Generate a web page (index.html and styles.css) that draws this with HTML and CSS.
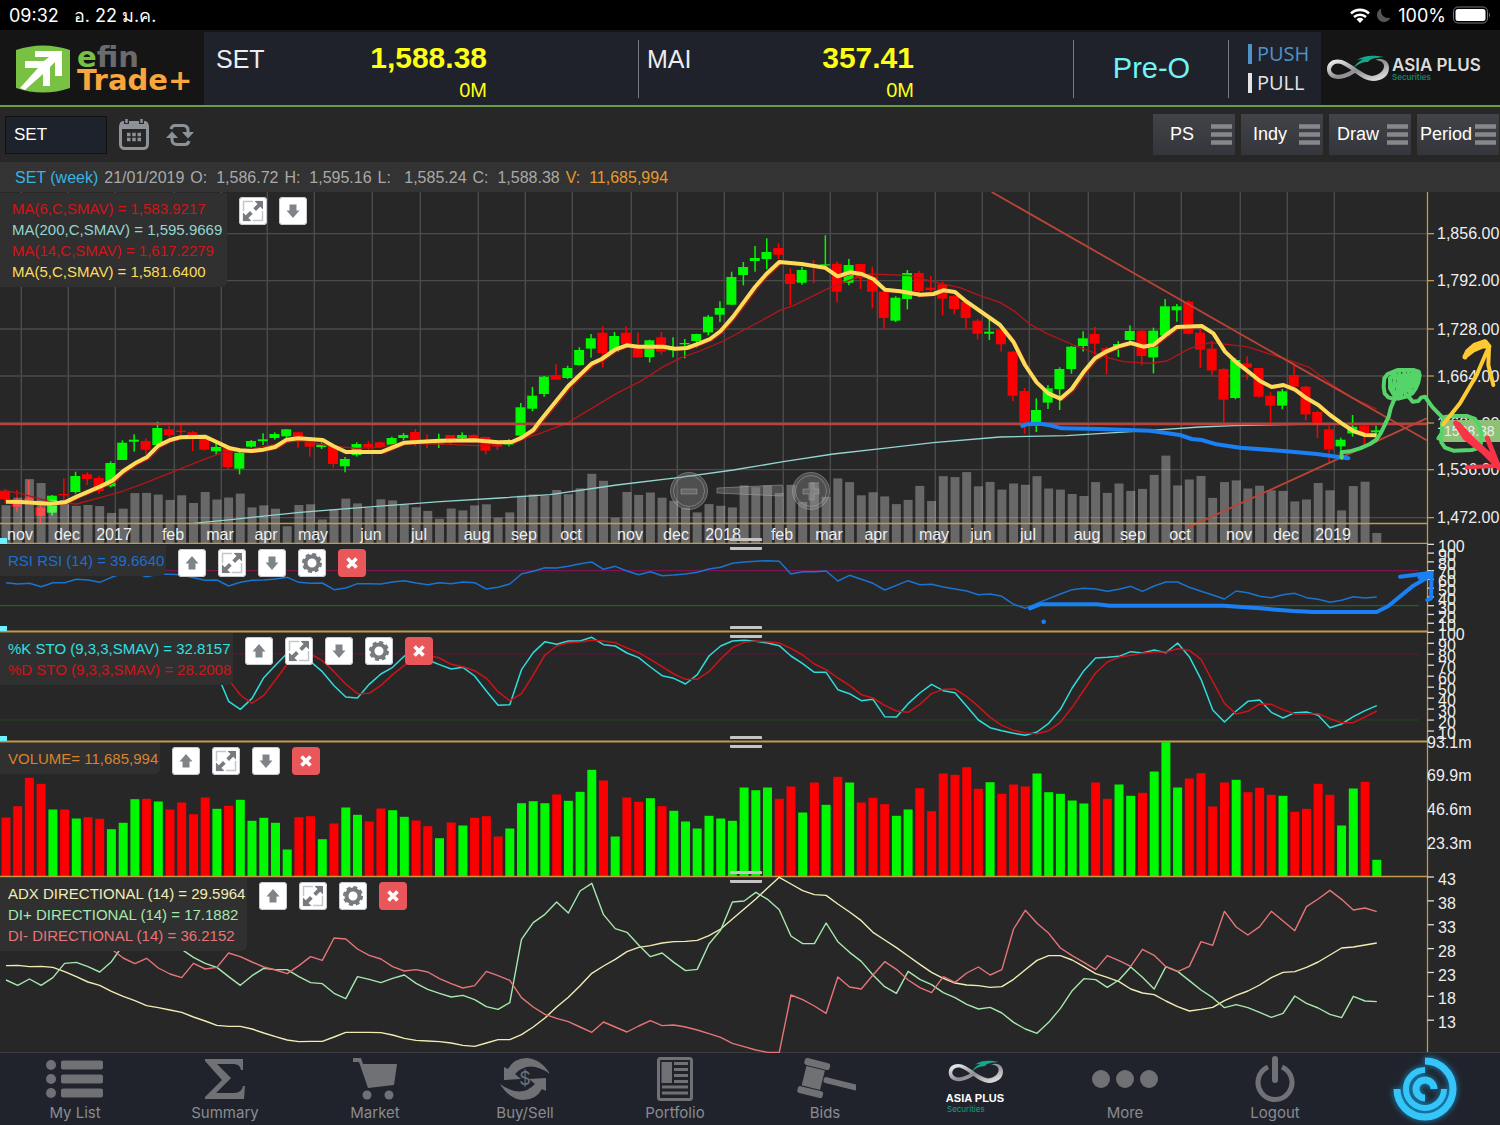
FILE: index.html
```html
<!DOCTYPE html>
<html lang="th">

<head>
    <meta charset="UTF-8">
    <meta name="viewport" content="width=device-width, initial-scale=1.0">
    <title>efin Trade+</title>

    <link rel="stylesheet" href="styles.css">
</head>

<body>
    <!-- shared icons -->
    <svg class="sprite" aria-hidden="true">
        <defs>
            <linearGradient id="silver" x1="0" y1="0" x2="1" y2="1">
                <stop offset="0" stop-color="#ffffff" />
                <stop offset="0.5" stop-color="#8e8e92" />
                <stop offset="1" stop-color="#f4f4f4" />
            </linearGradient>
        </defs>
        <symbol id="i-up" viewBox="0 0 28 28">
            <path d="M14 7l6.500 7.500h-3v6h-7v-6h-3z" fill="#808488" />
        </symbol>
        <symbol id="i-down" viewBox="0 0 28 28">
            <path d="M14 21l6.500-7.500h-3v-6h-7v6h-3z" fill="#808488" />
        </symbol>
        <symbol id="i-expand" viewBox="0 0 28 28">
            <path d="M4.500 14V4.500H14M23.500 14v9.500H14M4.500 17v6.500h6M17 4.500h6" fill="none" stroke="#c4c6c8" stroke-width="1.500" />
            <path d="M24 4v8.500l-2.800-2.800-4.200 4.200-2.700-2.700 4.200-4.200L15.500 4zM4 24v-8.500l2.800 2.800 4.200-4.200 2.700 2.700-4.200 4.200L12.500 24z" fill="#777b7f" />
        </symbol>
        <symbol id="i-gear" viewBox="0 0 28 28">
            <circle cx="14" cy="14" r="6.500" fill="none" stroke="#777b7f" stroke-width="4" />
            <circle cx="14" cy="14" r="8.800" fill="none" stroke="#777b7f" stroke-width="2.500" stroke-dasharray="4 2.910" />
        </symbol>
        <symbol id="i-close" viewBox="0 0 28 28">
            <path d="M9.500 9.500l9 9M18.500 9.500l-9 9" stroke="#fff" stroke-width="3.600" />
        </symbol>
        <symbol id="i-bars" viewBox="0 0 21 21">
            <path d="M0 2.500h21M0 10.500h21M0 18.500h21" stroke="#86878b" stroke-width="4.500" />
        </symbol>
        <symbol id="i-loop" viewBox="0 0 64 27">
            <path d="M2 14C2 6 10 3 17 5C28 9 36 19 47 21C54 20 59 16 59 11C59 7 54 5 50 5C58 2 64 6 64 13C64 21 57 26 48 26C35 25 28 14 16 9C10 7 6 11 6 15C7 19 12 21 18 19C24 17 27 15 30 13L33 16C27 20 22 23 14 24C6 24 2 20 2 14Z" fill="url(#silver)" />
            <path d="M29 13C30 9 35 6 38 4L32 5C40 0 48 0 59 2C50 3 46 3 43 7C38 7 34 8 29 13Z" fill="#18a689" />
        </symbol>
    </svg>

    <div class="statusbar">
        <span>09:32</span>
        <span class="today">อ. 22 ม.ค.</span>
        <span class="device">
            <svg width="20" height="15" viewBox="0 0 20 15">
                <path d="M1 5.500A13 13 0 0 1 19 5.500M4 9A9 9 0 0 1 16 9" fill="none" stroke="#fff" stroke-width="2.600" />
                <path d="M6.500 11.300a5 5 0 0 1 7 0L10 15z" fill="#fff" />
            </svg>
            <svg width="14" height="14" viewBox="0 0 14 14">
                <path d="M4.500 0.500A7 7 0 1 0 13.500 9.500A7 7 0 0 1 4.500 0.500Z" fill="#555" />
            </svg>
            <span>100%</span>
            <svg width="38" height="18" viewBox="0 0 38 18">
                <rect x="0.500" y="1" width="34" height="16" rx="4.500" fill="none" stroke="#777" />
                <rect x="2.500" y="3" width="30" height="12" rx="2.500" fill="#fff" />
                <path d="M36 6.500q2 2.500 0 5z" fill="#777" />
            </svg>
        </span>
    </div>

    <header class="header">
        <div class="logo">
            <svg width="54" height="48" viewBox="0 0 54 48">
                <path d="M0 5Q27-4 54 5V43Q27 52 0 43Z" fill="#79c143" />
                <path d="M19 6H46V31H39V17L34 22V41H27V29L9 45L4 43L22 23H9V16H28L33 12H19Z" fill="#fff" />
            </svg>
            <div class="logo-text">
                <div class="efin"><b>e</b>fin</div>
                <div class="trade">Trade+</div>
            </div>
        </div>
        <div class="index">
            <span class="index-name">SET</span>
            <div class="index-value">
                <strong>1,588.38</strong>
                <span>0M</span>
            </div>
        </div>
        <div class="index">
            <span class="index-name">MAI</span>
            <div class="index-value">
                <strong>357.41</strong>
                <span>0M</span>
            </div>
        </div>
        <div class="market-state">Pre-O</div>
        <div class="feed">
            <span class="push">PUSH</span>
            <span class="pull">PULL</span>
        </div>
        <div class="broker">
            <svg width="64" height="27"><use href="#i-loop" /></svg>
            <div class="broker-name">ASIA PLUS<small>Securities</small></div>
        </div>
    </header>

    <form class="toolbar" onsubmit="return false">
        <input class="symbol" type="text" value="SET" aria-label="Symbol">
        <button class="icon-button" type="button" aria-label="Calendar">
            <svg width="30" height="31" viewBox="0 0 30 31">
                <rect x="1.500" y="3.500" width="27" height="26" rx="4" fill="none" stroke="#8d9298" stroke-width="3" />
                <path d="M1 10V5q0-3 4-3h20q4 0 4 3v5z" fill="#8d9298" />
                <path d="M7.500 0v5M22.500 0v5" stroke="#272727" stroke-width="5" />
                <path d="M7.500 0v4M22.500 0v4" stroke="#8d9298" stroke-width="2.500" />
                <path d="M8 15.500h14M8 20.500h14" stroke="#8d9298" stroke-width="3.400" stroke-dasharray="3.500 1.750" />
            </svg>
        </button>
        <button class="icon-button" type="button" aria-label="Refresh">
            <svg width="28" height="22" viewBox="0 0 28 22">
                <path d="M5 5q1-3.500 4-3.500h8q5 0 5 5V9M23 17q-1 3.500-4 3.500h-8q-5 0-5-5V13" fill="none" stroke="#8d9298" stroke-width="3" />
                <path d="M16 8h12l-6 6.500zM0 14h12L6 7.500z" fill="#8d9298" />
            </svg>
        </button>
        <div class="menus">
            <button class="menu" type="button"><span>PS</span><svg width="21" height="21"><use href="#i-bars" /></svg></button>
            <button class="menu" type="button"><span>Indy</span><svg width="21" height="21"><use href="#i-bars" /></svg></button>
            <button class="menu" type="button"><span>Draw</span><svg width="21" height="21"><use href="#i-bars" /></svg></button>
            <button class="menu" type="button"><span>Period</span><svg width="21" height="21"><use href="#i-bars" /></svg></button>
        </div>
    </form>

    <div class="quote">
        <span class="quote-name">SET (week)</span>
        <span>21/01/2019</span>
        <span>O:  1,586.72</span>
        <span>H:  1,595.16</span>
        <span>L:   1,585.24</span>
        <span>C:  1,588.38</span>
        <span class="quote-volume">V:  11,685,994</span>
    </div>

    <main class="charts">
        <section class="pane">
            <svg class="plot plot-price" id="price" viewBox="0 7 1500 352"></svg>
            <div class="overlay">
                <ul class="legend legend-main">
                    <li class="red">MA(6,C,SMAV) = 1,583.9217</li>
                    <li class="aqua">MA(200,C,SMAV) = 1,595.9669</li>
                    <li class="red">MA(14,C,SMAV) = 1,617.2279</li>
                    <li class="gold">MA(5,C,SMAV) = 1,581.6400</li>
                </ul>
                <div class="tools" data-tools="expand down"></div>
            </div>
            <div class="grip"></div>
        </section>

        <section class="pane">
            <svg class="plot" id="rsi" viewBox="0 4 1500 88"></svg>
            <div class="overlay">
                <ul class="legend">
                    <li class="blue">RSI RSI (14) = 39.6640</li>
                </ul>
                <div class="tools" data-tools="up expand down gear close"></div>
            </div>
            <div class="grip"></div>
        </section>

        <section class="pane">
            <svg class="plot" id="sto" viewBox="0 92 1500 110"></svg>
            <div class="overlay">
                <ul class="legend">
                    <li class="cyan">%K STO (9,3,3,SMAV) = 32.8157</li>
                    <li class="red">%D STO (9,3,3,SMAV) = 28.2008</li>
                </ul>
                <div class="tools" data-tools="up expand down gear close"></div>
            </div>
            <div class="grip"></div>
        </section>

        <section class="pane">
            <svg class="plot" id="volume" viewBox="0 202 1500 135"></svg>
            <div class="overlay">
                <ul class="legend">
                    <li class="orange">VOLUME= 11,685,994</li>
                </ul>
                <div class="tools" data-tools="up expand down close"></div>
            </div>
            <div class="grip"></div>
        </section>

        <section class="pane">
            <svg class="plot" id="adx" viewBox="0 7 1500 175"></svg>
            <div class="overlay">
                <ul class="legend">
                    <li class="cream">ADX DIRECTIONAL (14) = 29.5964</li>
                    <li class="mint">DI+ DIRECTIONAL (14) = 17.1882</li>
                    <li class="salmon">DI- DIRECTIONAL (14) = 36.2152</li>
                </ul>
                <div class="tools" data-tools="up expand gear close"></div>
            </div>
        </section>
    </main>

    <nav class="tabs">
        <a href="#list">
            <svg width="58" height="38" viewBox="0 0 58 38" fill="#707174">
                <circle cx="5" cy="5" r="5" /><circle cx="5" cy="19" r="5" /><circle cx="5" cy="33" r="5" />
                <rect x="15" y="0.500" width="42" height="9" rx="2" /><rect x="15" y="14.500" width="42" height="9" rx="2" /><rect x="15" y="28.500" width="42" height="9" rx="2" />
            </svg>
            <span>My List</span>
        </a>
        <a href="#summary">
            <svg width="42" height="42" viewBox="0 0 42 42" fill="#707174">
                <path d="M1 1H39V12H37Q36 6 30 6H13L27 20L12 35H31Q38 34 39 28H41L40 41H1V39L18 22L1 3Z" />
            </svg>
            <span>Summary</span>
        </a>
        <a href="#market">
            <svg width="44" height="42" viewBox="0 0 44 42" fill="#707174">
                <path d="M0 0H8L10 6H44L41 27L15 30L6 4H0Z" />
                <circle cx="14" cy="37" r="4.500" /><circle cx="36" cy="37" r="4.500" />
            </svg>
            <span>Market</span>
        </a>
        <a href="#trade">
            <svg width="50" height="44" viewBox="0 0 50 44" fill="#707174">
                <path id="swoosh" d="M50 17Q41 2 27 1Q14 1 8 12L4 10V23L21 22L15 17Q29 2 50 17Z" />
                <use href="#swoosh" transform="rotate(180 25 22)" />
                <text x="25" y="28" text-anchor="middle" font-size="18">$</text>
            </svg>
            <span>Buy/Sell</span>
        </a>
        <a href="#portfolio">
            <svg width="36" height="44" viewBox="0 0 36 44">
                <rect x="1.500" y="1.500" width="33" height="41" rx="2" fill="none" stroke="#707174" stroke-width="3" />
                <path d="M4.500 5H15V26H4.500Z" fill="#707174" />
                <path d="M17 6.500H31M17 12.500H31M17 18.500H31M17 24.500H31M5 30H31M5 36H31" stroke="#707174" stroke-width="3" />
            </svg>
            <span>Portfolio</span>
        </a>
        <a href="#bids">
            <svg width="62" height="44" viewBox="0 0 62 44" fill="#707174">
                <g transform="translate(-1 3) rotate(14 20 21)">
                    <rect x="7" y="0" width="26" height="7" rx="2.500" /><rect x="10" y="8" width="19" height="20" /><rect x="7" y="29" width="26" height="7" rx="2.500" />
                    <rect x="30" y="14" width="35" height="6" rx="2.500" />
                </g>
            </svg>
            <span>Bids</span>
        </a>
        <a href="#broker" class="tab-broker">
            <svg width="56" height="30"><use href="#i-loop" /></svg>
            <b>ASIA PLUS</b>
            <small>Securities</small>
        </a>
        <a href="#more">
            <svg width="66" height="18" viewBox="0 0 66 18" fill="#707174">
                <circle cx="9" cy="9" r="9" /><circle cx="33" cy="9" r="9" /><circle cx="57" cy="9" r="9" />
            </svg>
            <span>More</span>
        </a>
        <a href="#logout">
            <svg width="40" height="46" viewBox="0 0 40 46" fill="none" stroke="#707174">
                <path d="M13 11A17 17 0 1 0 27 11" stroke-width="5" />
                <path d="M20 3V24" stroke-width="6" stroke-linecap="round" />
            </svg>
            <span>Logout</span>
        </a>
        <a href="#assist" class="tab-assist" aria-label="Assistant">
            <svg width="64" height="64" viewBox="0 0 64 64" fill="none" stroke="#34c6f8">
                <path d="M32 4A28 28 0 1 1 4 32" stroke-width="7" />
                <path d="M51 32A19 19 0 1 1 32 13" stroke-width="6" />
                <path d="M32 41A9 9 0 1 1 41 32" stroke-width="7" />
            </svg>
        </a>
    </nav>

    <script src="charts.js"></script>
</body>

</html>
```

FILE: styles.css
```css
* {
    box-sizing: border-box;
}

body {
    margin: 0;
    background-color: #272727;
    color: #fff;
    font-family: "Liberation Sans", Arial, sans-serif;
    font-size: 16px;
}

button,
input {
    font-family: inherit;
    color: inherit;
    border: none;
    padding: 0;
}

svg {
    display: block;
}

.sprite {
    position: absolute;
    width: 0;
    height: 0;
}

/* status bar */
.statusbar {
    display: flex;
    align-items: center;
    height: 30px;
    padding: 0 9px;
    background-color: #000;
    font-family: Inter, "Noto Sans", sans-serif;
    font-size: 18px;
}

.today {
    margin-left: 15px;
}

.device {
    display: flex;
    align-items: center;
    gap: 7px;
    margin-left: auto;
}

/* header */
.header {
    display: grid;
    grid-template-columns: 204px 1fr 1fr 155px 92px 179px;
    height: 77px;
    padding-top: 2px;
    background-color: #151515;
    border-bottom: 2px solid #6c9c48;
}

.logo {
    display: flex;
    align-items: center;
    gap: 7px;
    padding-left: 16px;
}

.logo-text {
    font-family: "DejaVu Sans", sans-serif;
    font-size: 29px;
    font-weight: bold;
    line-height: 23px;
}

.efin {
    color: #6a6b6e;
}

.efin b {
    color: #79c143;
}

.trade {
    color: #f9a63f;
}

.index,
.market-state,
.feed {
    position: relative;
    background-color: #1f222b;
}

.index {
    display: flex;
    justify-content: space-between;
    padding: 9px 152px 0 10px;
}

.index + .index {
    padding-left: 6px;
    padding-right: 160px;
}

/* divider on the right of a header cell */
.index::after,
.market-state::after {
    content: "";
    position: absolute;
    top: 8px;
    right: 0;
    bottom: 7px;
    border-right: 1px solid #777a80;
}

.index-name {
    padding: 4px 2px;
    font-size: 25px;
    line-height: 28px;
    color: #ececf0;
}

.index-value {
    display: flex;
    flex-direction: column;
    align-items: flex-end;
    color: #ffff14;
}

.index-value strong {
    font-size: 30px;
    line-height: 34px;
}

.index-value span {
    font-size: 20px;
    line-height: 30px;
}

.market-state {
    display: flex;
    align-items: center;
    justify-content: center;
    font-size: 29px;
    color: #6ff5f5;
}

.feed {
    display: flex;
    flex-direction: column;
    justify-content: center;
    gap: 9px;
    padding-left: 19px;
    font-family: "Open Sans", sans-serif;
    font-size: 20px;
    line-height: 20px;
}

.feed span {
    border-left: 4px solid;
    padding-left: 5px;
}

.push {
    color: #4f93c8;
}

.pull {
    color: #e4e4e6;
}

.broker {
    display: flex;
    align-items: center;
    gap: 3px;
    padding-left: 4px;
}

.broker-name {
    font-family: Inter, sans-serif;
    font-size: 17px;
    font-weight: 600;
    line-height: 17px;
    color: #dcdcdc;
    white-space: nowrap;
}

.broker-name small {
    display: block;
    font-size: 8px;
    line-height: 6px;
    color: #14806a;
}

/* toolbar */
.toolbar {
    display: flex;
    align-items: center;
    height: 55px;
    padding-left: 5px;
}

.symbol {
    width: 102px;
    height: 38px;
    padding: 0 8px;
    background-color: #1e222c;
    border: 1px solid #111;
    font-size: 17px;
}

.icon-button {
    margin-left: 12px;
    background: none;
}

.icon-button + .icon-button {
    margin-left: 17px;
}

.menus {
    display: flex;
    gap: 6px;
    margin-left: auto;
    padding-right: 1px;
}

.menu {
    display: flex;
    align-items: center;
    width: 82px;
    height: 41px;
    padding-right: 3px;
    background: linear-gradient(#414348, #35363b);
    font-size: 18px;
}

.menu span {
    flex: 1;
}

.quote {
    display: flex;
    gap: 6px;
    height: 30px;
    padding-left: 15px;
    background-color: #333;
    color: #a9a9a9;
    line-height: 31px;
}

.quote span {
    white-space: pre;
}

.quote .quote-name {
    color: #35b5e5;
}

.quote .quote-volume {
    color: #e59a2e;
}

/* charts */
.pane {
    position: relative;
}

.plot {
    width: 100%;
    height: auto;
    overflow: visible;
}

.plot-price {
    overflow: hidden;
}

.plot text {
    fill: #eee;
    font-size: 16px;
}

.plot .last-price {
    font-size: 14px;
}

.overlay {
    position: absolute;
    top: 1px;
    left: 0;
    display: flex;
    align-items: flex-start;
    gap: 12px;
}

.legend {
    margin: 0;
    padding: 5px 2px 5px 8px;
    list-style: none;
    background-color: #303030;
    border-radius: 0 0 6px 0;
    font-size: 15px;
    line-height: 21px;
}

.legend-main {
    padding-left: 12px;
    padding-right: 5px;
}

.red { color: #d01418; }
.aqua { color: #93d5d0; }
.gold { color: #fbdc5c; }
.blue { color: #1b6fd0; }
.cyan { color: #2fe0e0; }
.orange { color: #d8832c; }
.cream { color: #f2ecb4; }
.mint { color: #a6e8ae; }
.salmon { color: #e77478; }

.tools {
    display: flex;
    gap: 12px;
    margin-top: 4px;
}

.tool {
    width: 28px;
    height: 28px;
    background-color: #fff;
    border-radius: 4px;
    box-shadow: inset 0 0 0 1px #c8ccd0;
}

.tool svg {
    width: 28px;
    height: 28px;
}

.tool-close {
    background-color: #e9575b;
    box-shadow: none;
}

.grip {
    position: absolute;
    z-index: 1;
    left: 50%;
    bottom: -6px;
    width: 32px;
    height: 12px;
    margin-left: -20px;
    border-top: 3px solid #c4c4c4;
    border-bottom: 3px solid #c4c4c4;
    border-radius: 1px;
}

/* bottom tabs */
.tabs {
    display: grid;
    grid-template-columns: repeat(10, 1fr);
    height: 73px;
    background-color: #20232c;
    border-top: 1px solid #3a3c42;
}

.tabs a {
    display: grid;
    grid-template-rows: 52px 16px;
    align-items: center;
    justify-items: center;
    color: #8a8b8f;
    font-family: Inter, sans-serif;
    font-size: 15px;
    line-height: 16px;
    text-decoration: none;
}

.tabs .tab-broker {
    grid-template-rows: 38px 14px 8px;
    color: #fff;
}

.tab-broker b {
    font-family: "Liberation Sans", sans-serif;
    font-size: 11px;
    line-height: 14px;
}

.tab-broker small {
    justify-self: start;
    margin-left: 47px;
    font-size: 8px;
    line-height: 8px;
    color: #14a085;
}

.tabs .tab-assist {
    grid-template-rows: 1fr;
}

.tab-assist svg {
    filter: drop-shadow(0 0 3px #1791d0);
}
```

FILE: charts.js
```js
// heights and levels below are stored in thirds of a pixel
const U = 3;
const AXIS_X = 1427.5;
const GOLD = '#c39a4c';

function barX(i) {
    return 6 + i * 11.716;
}

function rect(x, y, w, h, fill, extra) {
    return `<rect x="${x.toFixed(1)}" y="${y.toFixed(1)}" width="${w}" height="${h.toFixed(1)}" fill="${fill}" ${extra || ''}/>`;
}

function line(x1, y1, x2, y2, color, width) {
    return `<line x1="${x1}" y1="${y1}" x2="${x2}" y2="${y2}" stroke="${color}" stroke-width="${width || 1}"/>`;
}

function label(x, y, text, anchor) {
    return `<text x="${x}" y="${y}" text-anchor="${anchor || 'start'}">${text}</text>`;
}

function polyline(points, color, width) {
    return `<polyline points="${points.join(' ')}" fill="none" stroke="${color}" stroke-width="${width}" stroke-linejoin="round"/>`;
}

// one value per bar, starting with bar number "from"
function series(values, color, width, from) {
    return polyline(values.map((v, i) => [barX(i + (from || 0)), v / U]), color, width);
}

// free points x,y,x,y...
function path(values, color, width, dx, dy) {
    const points = [];
    for (let i = 0; i < values.length; i += 2) {
        points.push([(values[i] + (dx || 0)) / U, (values[i + 1] + (dy || 0)) / U]);
    }
    return polyline(points, color, width);
}

function pen(values, color, width) {
    return `<g stroke-linecap="round">${path(values, color, width, 3000)}</g>`;
}

function draw(id, parts) {
    document.getElementById(id).innerHTML = parts.join('');
}

const volume = 'r832 r798 r713 r731 g808 r808 g835 r831 r836 g867 g848 g777 r776 g784 r808 r787 r822 r772 g806 r797 g779 g842 g833 g848 g928 r831 r828 g897 r850 g802 g824 r844 r805 g810 g830 r841 r858 g894 r847 g856 r833 r828 r889 g865 g789 g783 g789 r763 g782 g755 g689 r721 g889 r772 r785 g774 r798 g812 g844 g865 g827 g835 g842 g742 g750 g742 r776 r739 g817 r727 g794 r710 g727 r787 r773 r792 g827 g808 r744 r813 r700 r704 r681 r746 g726 r761 r733 r739 g700 g756 g761 g781 g790 r727 r776 g733 g767 r758 g694 g606 g742 r715 r699 r799 r727 g719 r756 r743 r764 g767 r815 r806 r731 r764 g856 g745 r725 g959'
    .split(' ').map(s => ({ up: s[0] === 'g', h: (1009 - s.slice(1)) / U }));

// colour, body top, body bottom, wick top, wick bottom
const candles = `r917,943,912,955 r955,965,915,980 r940,946,885,948 r968,992,955,1015 g932,983,930,992 r927,931,880,945
g873,921,860,926 r868,882,862,900 r879,918,873,926 g834,904,829,907 g773,825,766,825 g764,770,748,800 r768,794,760,808
g729,780,710,784 r733,750,723,756 r737,741,720,750 r742,750,738,798 r762,794,760,797 g786,799,770,808 r790,846,788,852
g803,851,800,868 g768,785,765,788 g763,768,745,780 g747,759,742,764 g733,754,732,758 r742,770,740,788 r770,785,768,815
g779,786,772,792 r783,837,780,848 g822,844,816,862 g777,810,772,815 r777,788,769,795 r772,786,770,790 g759,779,755,782
g750,759,744,765 r741,768,732,784 r766,774,748,790 g766,776,746,789 r750,764,750,780 g750,759,742,762 r750,768,747,772
r756,797,755,808 r778,785,775,795 g766,779,762,784 g667,752,654,755 g632,671,606,679 g575,627,573,635 r570,584,538,584
g549,579,542,582 g495,540,487,542 g460,491,447,518 r443,504,424,548 g453,500,441,502 r443,478,424,482 r485,517,443,518
g466,516,464,532 r457,500,441,509 g490,496,457,517 g474,478,462,520 g447,468,446,488 g395,442,390,451 g369,389,349,411
g276,359,260,360 g246,270,231,301 g219,228,183,260 g201,222,160,253 r189,209,175,222 r267,297,250,360 g255,293,246,299
r240,246,225,295 g238,242,151,242 r236,320,229,352 g240,293,222,301 r237,280,237,312 r275,320,245,370 r320,399,318,432
g338,407,334,411 g264,342,255,373 r264,318,257,338 r308,315,273,328 r298,341,290,391 r333,372,330,388 r351,399,350,432
r407,446,403,463 g440,446,400,465 r435,478,430,500 r500,632,498,648 r618,712,609,746 g675,713,640,741 g610,653,600,672
g552,612,547,675 g485,552,483,566 g460,483,439,500 r447,476,426,510 r490,500,485,568 g477,488,468,516 g438,465,421,470
r437,513,433,541 g437,517,428,565 g364,452,342,455 g364,376,357,410 r350,446,346,449 r443,494,432,548 r491,556,468,570
r552,644,550,716 g525,639,520,643 r535,548,514,584 r549,635,548,638 r632,662,622,716 g619,662,612,673 r570,605,540,605
r605,688,603,707 r681,716,678,759 r733,794,722,832 g764,784,758,822 g725,745,690,755 r722,745,720,778 g736,742,722,748`
    .split(/\s+/);

const ma5 = [18, 950, 60, 951, 150, 956, 195, 952, 230, 935, 265, 920, 300, 905, 337, 887, 370, 858, 405, 835, 440, 817, 475, 782,
    510, 765, 540, 757, 615, 755, 650, 771, 690, 790, 720, 796, 755, 798, 790, 794, 825, 786, 860, 764, 895, 760, 968, 765,
    1000, 783, 1038, 801, 1143, 801, 1178, 787, 1213, 773, 1250, 771, 1320, 767, 1425, 766, 1495, 772, 1535, 771, 1565, 758,
    1600, 735, 1620, 708, 1705, 603, 1775, 536, 1805, 522, 1845, 494, 1880, 481, 1915, 485, 1990, 485, 2025, 491, 2060, 489,
    2090, 478, 2130, 462, 2162, 438, 2200, 394, 2265, 306, 2300, 266, 2338, 231, 2405, 237, 2475, 248, 2513, 274, 2550, 262,
    2585, 267, 2620, 282, 2655, 314, 2700, 319, 2760, 329, 2800, 327, 2830, 316, 2865, 321, 2900, 350, 3000, 420, 3040, 470,
    3075, 540, 3110, 592, 3145, 625, 3181, 641, 3215, 612, 3250, 562, 3285, 520, 3320, 499, 3355, 484, 3392, 474, 3430, 485,
    3460, 480, 3495, 452, 3530, 426, 3605, 423, 3640, 445, 3675, 500, 3710, 533, 3745, 560, 3780, 588, 3815, 606, 3850, 600,
    3885, 614, 3920, 640, 3955, 660, 3990, 690, 4025, 715, 4060, 738, 4095, 750, 4130, 751];

const ma14 = [18, 918, 60, 925, 150, 950, 230, 957, 300, 938, 370, 918, 440, 892, 520, 860, 620, 820, 660, 806, 755, 792, 825, 778,
    900, 766, 990, 783, 1070, 790, 1140, 787, 1200, 775, 1350, 778, 1430, 782, 1500, 778, 1560, 765, 1620, 745, 1700, 715,
    1775, 670, 1850, 625, 1920, 590, 1990, 545, 2045, 517, 2100, 498, 2170, 468, 2260, 420, 2340, 376, 2380, 362, 2490, 308,
    2570, 278, 2610, 267, 2730, 272, 2820, 295, 2880, 308, 2940, 332, 3000, 352, 3045, 380, 3090, 418, 3140, 445, 3220, 480,
    3320, 517, 3370, 530, 3450, 535, 3500, 528, 3570, 490, 3630, 473, 3740, 485, 3850, 520, 3930, 548, 3990, 595, 4060, 640,
    4130, 672];

const ma200 = [580, 1015, 700, 1003, 900, 982, 1130, 964, 1320, 950, 1500, 939, 1650, 929, 1850, 900, 2040, 877, 2200, 855, 2350, 830,
    2500, 807, 2650, 790, 2800, 773, 3000, 756, 3200, 752, 3440, 737, 3600, 726, 3700, 722, 3900, 718, 4130, 716];

const months = [['nov', 20], ['dec', 67], ['2017', 114], ['feb', 173], ['mar', 220], ['apr', 266], ['may', 313], ['jun', 371],
    ['jul', 419], ['aug', 477], ['sep', 524], ['oct', 571], ['nov', 630], ['dec', 676], ['2018', 723], ['feb', 782], ['mar', 829],
    ['apr', 876], ['may', 934], ['jun', 981], ['jul', 1028], ['aug', 1087], ['sep', 1133], ['oct', 1180], ['nov', 1239],
    ['dec', 1286], ['2019', 1333]];

const prices = [['1,856.00', 146], ['1,792.00', 287], ['1,728.00', 432], ['1,664.00', 573], ['1,600.00', 714], ['1,536.00', 854], ['1,472.00', 998]];

function candle(s, i) {
    const [top, bottom, high, low] = s.slice(1).split(',').map(v => v / U);
    const x = barX(i) - 1;
    const color = s[0] === 'g' ? '#00f800' : '#fb0000';
    return rect(x - 0.5, high, 1.5, low - high, color) + rect(x - 5, top, 10, bottom - top, color);
}

function drawPrice() {
    const p = [];
    prices.forEach(([, y]) => p.push(line(0, y / U, AXIS_X, y / U, '#4b4b4b', 1.4)));
    months.forEach(([, x]) => p.push(line(x + 1.3, 7, x + 1.3, 338, '#4b4b4b', 1.4)));
    candles.forEach((s, i) => p.push(candle(s, i)));
    volume.forEach((v, i) => p.push(rect(barX(i) - 4.5, 359 - v.h * 0.658, 9, v.h * 0.658, '#fff', 'fill-opacity="0.3"')));

    p.push(path(ma14, '#b3161a', 1.3));
    p.push(path(ma5, '#b3161a', 1.3, 8, 4));
    p.push(path(ma200, '#93d5d0', 1.3));
    p.push(path([2975, 21, 4280, 766], '#bb4434', 1.8));
    p.push(path([3565, 1027, 4280, 700], '#bb4434', 1.8));
    p.push(line(0, 239, AXIS_X, 239, '#bf4038', 2.6));
    p.push(path(ma5, '#fedb58', 4));

    // zoom slider
    p.push(`<g fill="#999" fill-opacity="0.35" stroke="#aaa" stroke-opacity="0.5">
        <circle cx="689" cy="306" r="18.500"/><circle cx="689" cy="306" r="15.500" fill="none"/>
        <circle cx="811" cy="306" r="18.500"/><circle cx="811" cy="306" r="15.500" fill="none"/>
        <path d="M717 303L781 300Q783 300 783 302V309Q783 311 781 311L717 308Z"/>
        <path d="M681 304H697V309H681Z"/>
        <path d="M809 298H814V304H819V309H814V315H809V309H803V304H809Z"/></g>`);

    p.push(line(0, 338.5, AXIS_X, 338.5, GOLD, 1.3), line(0, 358.5, AXIS_X, 358.5, GOLD, 1.5));
    p.push(line(AXIS_X, 7, AXIS_X, 359, GOLD, 1.3));
    months.forEach(([name, x]) => p.push(label(x, 355, name, 'middle')));
    prices.forEach(([text, y]) => {
        p.push(line(AXIS_X, y / U, 1434, y / U, GOLD, 1.3), label(1437, (y / U + 5.5).toFixed(1), text));
    });
    p.push(rect(1440, 235, 63, 22, '#8fc077', 'rx="4"'));
    p.push('<text class="last-price" x="1444" y="251">1588.38</text>');
    p.push(rect(0, 353, 7, 6, '#6ff0ff'));

    // pen notes
    const green = '#55d569';
    p.push(pen([67, 723, 80, 718, 120, 716, 150, 721, 185, 730, 300, 732, 450, 737, 540, 750, 575, 762, 605, 765, 650, 778, 720, 788,
        850, 798, 950, 807, 1045, 820], '#1a80f4', 4));
    p.push(pen([1025, 818, 1025, 802, 1050, 799, 1080, 790, 1110, 777, 1128, 765, 1142, 745, 1155, 718, 1166, 695, 1172, 670, 1183, 643], green, 4));
    p.push(pen([1185, 643, 1165, 637, 1154, 625, 1151, 605, 1153, 580, 1163, 567, 1185, 558, 1195, 555, 1240, 555, 1256, 560, 1259, 570,
        1255, 592, 1247, 610, 1238, 624, 1222, 634, 1195, 641, 1182, 630, 1170, 610, 1170, 580, 1185, 566, 1180, 618, 1192, 632, 1198, 564,
        1203, 630, 1213, 562, 1216, 627, 1226, 564, 1229, 620, 1238, 564, 1240, 604, 1248, 568, 1180, 575, 1240, 590, 1180, 600, 1232, 612, 1190, 622], green, 4));
    p.push(pen([1222, 632, 1230, 640, 1238, 650, 1255, 648, 1263, 638, 1275, 635, 1284, 648, 1298, 667, 1330, 700], green, 4));
    p.push(pen([1315, 760, 1325, 745, 1327, 715, 1335, 696, 1360, 693, 1400, 693, 1425, 702, 1438, 722, 1445, 748, 1442, 778, 1432, 790,
        1415, 795, 1360, 797, 1335, 788, 1324, 772, 1322, 755], green, 4));
    p.push(pen([1330, 718, 1380, 655, 1430, 570, 1460, 500, 1467, 490, 1465, 540, 1480, 600], '#fdca33', 4));
    p.push(pen([1395, 516, 1402, 500, 1425, 480, 1455, 470, 1467, 485, 1450, 482, 1420, 495, 1395, 514], '#fdca33', 5));
    p.push(pen([1367, 714, 1395, 758, 1450, 800, 1497, 848, 1462, 760], '#fa3347', 5));
    p.push(pen([1400, 847, 1500, 842], '#fa3347', 4));
    p.push(pen([1375, 720, 1420, 768, 1480, 822], '#fa3347', 6));
    draw('price', p);
}

// right hand scale of a lower pane
function scale(values, first, step, top, bottom) {
    let out = line(AXIS_X, top, AXIS_X, bottom, GOLD, 1.3);
    values.forEach((v, i) => {
        const y = (first + i * step) / U;
        out += line(AXIS_X, y, 1434, y, '#ddd', 1.3) + label(1438, (y + 8).toFixed(1), v);
    });
    return out;
}

const hundred = [100, 90, 80, 70, 60, 50, 40, 30, 20, 10];

const rsi = [128, 132, 130, 140, 128, 128, 118, 120, 127, 112, 100, 100, 110, 103, 103, 104, 113, 121, 120, 138, 127, 121, 120, 117, 112,
    127, 130, 129, 149, 144, 131, 131, 132, 126, 122, 129, 134, 128, 131, 126, 128, 147, 142, 132, 102, 94, 83, 84, 79, 71, 66, 88, 79,
    93, 104, 95, 107, 105, 102, 97, 87, 82, 70, 66, 64, 62, 64, 102, 95, 95, 93, 123, 106, 118, 130, 150, 136, 122, 134, 133, 141, 147,
    153, 164, 162, 169, 193, 205, 190, 176, 162, 149, 145, 147, 154, 148, 139, 154, 138, 126, 126, 142, 154, 165, 177, 153, 158, 169,
    173, 164, 160, 173, 178, 187, 181, 170, 174, 171];

const stoK = [400, 484, 508, 475, 413, 376, 340, 330, 365, 395, 437, 471, 474, 433, 402, 382, 348, 345, 360, 374, 387, 382, 408, 453, 496,
    494, 389, 338, 305, 313, 303, 303, 292, 314, 318, 339, 353, 381, 407, 415, 432, 404, 348, 318, 303, 301, 304, 309, 317, 348, 371,
    397, 397, 449, 461, 482, 478, 530, 531, 491, 459, 433, 452, 458, 499, 540, 563, 572, 580, 586, 576, 550, 508, 444, 392, 354, 352,
    349, 335, 339, 330, 338, 309, 350, 418, 510, 546, 513, 484, 480, 517, 534, 518, 516, 526, 563, 552, 530, 512, 497];

const stoD = [380, 418, 465, 490, 466, 420, 372, 350, 342, 362, 395, 432, 461, 460, 436, 404, 376, 355, 346, 354, 373, 380, 392, 415, 455,
    482, 461, 405, 345, 318, 308, 306, 301, 303, 308, 324, 338, 358, 380, 402, 418, 418, 395, 357, 323, 307, 303, 305, 309, 325, 345,
    372, 389, 414, 436, 464, 474, 496, 513, 517, 493, 461, 448, 447, 470, 499, 532, 556, 571, 579, 581, 572, 547, 502, 450, 399, 366,
    352, 346, 340, 336, 336, 326, 331, 358, 424, 490, 522, 514, 492, 493, 509, 522, 522, 521, 536, 548, 548, 531, 513];

const adx = [287, 286, 290, 289, 292, 305, 320, 336, 346, 364, 379, 392, 407, 413, 420, 427, 441, 453, 466, 469, 469, 477, 489, 500, 510,
    515, 514, 514, 501, 487, 487, 487, 488, 495, 505, 511, 513, 515, 519, 526, 529, 519, 509, 509, 494, 471, 444, 411, 382, 347, 310,
    288, 268, 245, 232, 227, 219, 215, 214, 211, 197, 177, 147, 117, 87, 54, 22, 42, 62, 74, 76, 102, 126, 152, 187, 210, 233, 258, 283,
    307, 325, 339, 345, 347, 352, 350, 328, 299, 271, 257, 257, 270, 290, 311, 322, 335, 357, 369, 374, 393, 410, 423, 418, 412, 392,
    376, 363, 345, 323, 307, 305, 292, 276, 255, 234, 231, 225, 219];

const diPlus = [330, 346, 327, 346, 323, 280, 277, 290, 306, 275, 225, 210, 240, 205, 220, 238, 262, 280, 292, 320, 346, 317, 295, 299, 299,
    320, 338, 341, 370, 386, 320, 328, 338, 325, 315, 340, 358, 370, 381, 376, 389, 410, 418, 398, 208, 158, 133, 96, 129, 63, 40, 134,
    176, 187, 225, 260, 249, 277, 302, 298, 222, 180, 96, 93, 67, 88, 119, 198, 221, 221, 159, 215, 247, 274, 315, 350, 370, 304, 328,
    344, 368, 383, 403, 417, 412, 429, 457, 477, 490, 457, 415, 362, 326, 329, 352, 330, 291, 322, 357, 290, 304, 332, 360, 383, 413,
    404, 413, 427, 442, 430, 378, 400, 414, 433, 443, 379, 393, 395];

const diMinus = [210, 237, 264, 281, 265, 294, 312, 323, 280, 297, 292, 249, 260, 276, 291, 300, 311, 287, 260, 271, 204, 207, 237, 256, 267,
    290, 303, 299, 306, 326, 341, 354, 347, 304, 317, 331, 383, 411, 433, 445, 455, 471, 487, 456, 471, 486, 468, 452, 467, 465, 471,
    480, 491, 502, 520, 530, 540, 547, 547, 375, 389, 408, 430, 321, 351, 357, 315, 275, 298, 330, 353, 368, 320, 337, 309, 291, 315,
    299, 177, 121, 160, 190, 234, 257, 277, 299, 257, 272, 289, 238, 256, 290, 305, 289, 215, 226, 124, 171, 195, 170, 124, 153, 182,
    110, 87, 61, 88, 120, 114, 125];

drawPrice();

draw('rsi', [
    line(0, 30.7, 1419, 30.7, '#7c1450', 1.2),
    line(0, 65.7, 1419, 65.7, '#1f6420', 1.2),
    series(rsi, '#1b73d0', 1.5),
    scale(hundred, 13, 26.3, 4, 92),
    line(0, 91.5, AXIS_X, 91.5, GOLD, 1.8),
    rect(0, 86, 7, 5, '#6ff0ff'),
    pen([90, 205, 120, 193, 290, 193, 330, 197, 670, 197, 780, 205, 880, 213, 940, 216, 1130, 216, 1165, 198, 1240, 137, 1290, 108], '#1a80f4', 4),
    pen([1200, 110, 1295, 98, 1293, 175, 1282, 180], '#1a80f4', 4),
    pen([1260, 112, 1290, 108], '#1a80f4', 5),
    '<circle cx="1043.700" cy="81.700" r="2.300" fill="#1a80f4"/>'
]);

draw('sto', [
    line(0, 114, 1419, 114, '#5b1a3a', 1.2),
    line(0, 180, 1419, 180, '#1f4a20', 1.2),
    series(stoK, '#2fdcdc', 1.5, 18),
    series(stoD, '#cc1418', 1.5, 18),
    scale(hundred, 277, 32.9, 92, 202),
    line(0, 201.5, AXIS_X, 201.5, GOLD, 1.8),
    rect(0, 196, 7, 5, '#6ff0ff')
]);

draw('volume', [
    ...volume.map((v, i) => rect(barX(i) - 4.5, 336.5 - v.h, 9, v.h, v.up ? '#00f800' : '#fb0000')),
    line(AXIS_X, 202, AXIS_X, 337, GOLD, 1.3),
    line(0, 336.5, AXIS_X, 336.5, GOLD, 1.3),
    label(1427, 208, '93.1m'), label(1427, 241, '69.9m'), label(1427, 275, '46.6m'), label(1427, 309, '23.3m')
]);

draw('adx', [
    series(adx, '#f2ecb4', 1.4),
    series(diPlus, '#a6e8ae', 1.4),
    series(diMinus, '#e77478', 1.4, 8),
    scale([43, 38, 33, 28, 23, 18, 13], 21, 71.6, 7, 182)
]);

// pane buttons
const toolNames = { up: 'Move up', down: 'Move down', expand: 'Expand', gear: 'Settings', close: 'Close' };

document.querySelectorAll('.tools').forEach(box => {
    box.innerHTML = box.dataset.tools.split(' ').map(name =>
        `<button class="tool tool-${name}" type="button" aria-label="${toolNames[name]}"><svg><use href="#i-${name}"/></svg></button>`
    ).join('');
});
```
